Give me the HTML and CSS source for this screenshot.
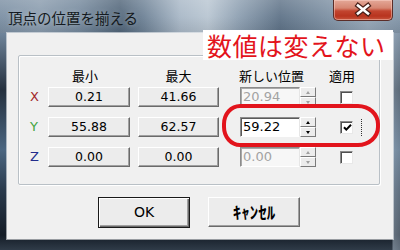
FILE: index.html
```html
<!DOCTYPE html>
<html lang="ja">
<head>
<meta charset="utf-8">
<title>頂点の位置を揃える</title>
<link rel="stylesheet" href="styles.css">
</head>
<body>
<div class="window">
  <div class="titlebar">
    <span class="title">頂点の位置を揃える</span>
    <div class="close">
      <svg width="60" height="21" viewBox="0 0 60 21">
        <path d="M25 6.5 L35 14.5 M35 6.5 L25 14.5" stroke="#4a2019" stroke-width="5" stroke-linecap="square" fill="none"/>
        <path d="M25 6.5 L35 14.5 M35 6.5 L25 14.5" stroke="#ffffff" stroke-width="2.6" stroke-linecap="square" fill="none"/>
      </svg>
    </div>
  </div>
  <div class="client">
    <div class="group">
      <div class="grid">
        <span></span>
        <span class="hd hd-min">最小</span>
        <span class="hd hd-max">最大</span>
        <span class="hd hd-new">新しい位置</span>
        <span class="hd hd-apply">適用</span>

        <span class="axis ax-x">X</span>
        <div class="vbtn w1">0.21</div>
        <div class="vbtn w2">41.66</div>
        <div class="combo disabled">
          <div class="edit">20.94</div>
          <div class="spin"><span class="sb"><i class="up"></i></span><span class="sb"><i class="dn"></i></span></div>
        </div>
        <div class="chk-cell"><span class="chk"></span></div>

        <span class="axis ax-y">Y</span>
        <div class="vbtn w1">55.88</div>
        <div class="vbtn w2">62.57</div>
        <div class="combo">
          <div class="edit">59.22</div>
          <div class="spin"><span class="sb"><i class="up"></i></span><span class="sb"><i class="dn"></i></span></div>
        </div>
        <div class="chk-cell">
          <span class="chk">
            <svg width="9" height="9" viewBox="0 0 9 9"><path d="M1 4.2 L3.3 6.6 L8 1.8" stroke="#000" stroke-width="2" fill="none"/></svg>
          </span>
          <span class="focus"></span>
        </div>

        <span class="axis ax-z">Z</span>
        <div class="vbtn w1">0.00</div>
        <div class="vbtn w2">0.00</div>
        <div class="combo disabled">
          <div class="edit">0.00</div>
          <div class="spin"><span class="sb"><i class="up"></i></span><span class="sb"><i class="dn"></i></span></div>
        </div>
        <div class="chk-cell"><span class="chk"></span></div>
      </div>
    </div>
    <div class="actions">
      <div class="btn default">OK</div>
      <div class="btn cancel">ｷｬﾝｾﾙ</div>
    </div>
  </div>
  <div class="note">数値は変えない</div>
  <div class="mark"></div>
</div>
</body>
</html>
```

FILE: styles.css
```css
html, body {
  margin: 0;
  padding: 0;
}
body {
  width: 400px;
  height: 250px;
  overflow: hidden;
  background: #2a3644;
}
.window {
  position: relative;
  width: 400px;
  height: 250px;
  display: flex;
  flex-direction: column;
  background:
    linear-gradient(90deg, rgba(0,0,0,0) 0, rgba(0,0,0,0) 392px, rgba(170,185,200,0.55) 393px, rgba(150,165,180,0.5) 400px),
    linear-gradient(180deg, #8ea2b6 0px, #6e8399 34px, #24303e 90px, #4b6681 150px, #2a3a4c 190px, #141c26 235px, #2f3b48 250px);
  font-family: "Noto Sans CJK JP", sans-serif;
}
.titlebar {
  height: 33px;
  flex: none;
  display: flex;
  align-items: flex-start;
  background:
    linear-gradient(180deg, rgba(255,255,255,0.18) 0, rgba(255,255,255,0.05) 50%, rgba(0,0,0,0.08) 100%),
    linear-gradient(90deg, #7c90a4 0%, #8a9cae 10%, #75899d 20%, #52667a 30%, #6f8397 36%, #a9b8c7 45%, #b9c6d2 52%, #8c9eb0 60%, #5f7388 70%, #7d90a3 82%, #96a7b8 92%, #8396a9 100%);
}
.title {
  margin: 8px 0 0 8px;
  font-size: 14.5px;
  line-height: 20px;
  color: #141a20;
  text-shadow: 0 0 5px rgba(255,255,255,0.35);
}
.close {
  margin-left: auto;
  margin-right: 7px;
  width: 60px;
  height: 21px;
  box-sizing: border-box;
  border: 1px solid #5b2d28;
  border-top: none;
  border-radius: 0 0 5px 5px;
  background: linear-gradient(180deg, #e4a898 0%, #d68672 40%, #c2452f 55%, #b8341f 80%, #c8553c 100%);
  box-shadow: inset 0 0 0 1px rgba(255,220,210,0.45);
}
.close svg {
  display: block;
  margin: -1px 0 0 -1px;
}
.client {
  margin: 0 7px;
  height: 206px;
  flex: none;
  background: #f0f0f0;
  box-shadow: 0 0 0 1px rgba(255,255,255,0.55);
  display: flex;
  flex-direction: column;
}
.group {
  margin: 22px 0 0 11px;
  width: 362px;
  height: 130px;
  box-sizing: border-box;
  border: 1px solid #b9c0c6;
  border-radius: 2px;
  box-shadow: inset 1px 1px 0 #ffffff, 1px 1px 0 #ffffff;
  padding: 10px 0 0 10px;
}
.grid {
  display: grid;
  grid-template-columns: 19px 90px 102px 100px 1fr;
  grid-template-rows: 21px 30px 30px 30px;
  align-items: start;
}
.hd {
  font-size: 13px;
  line-height: 19px;
  color: #000;
}
.hd-min {
  width: 74px;
  text-align: center;
}
.hd-max {
  width: 81px;
  text-align: center;
}
.hd-new {
  margin-left: -1px;
}
.hd-apply {
  margin-left: -11px;
}
.axis {
  font-family: "DejaVu Sans", sans-serif;
  font-size: 13px;
  line-height: 20px;
  margin-left: 1px;
}
.ax-x { color: #a3282c; }
.ax-y { color: #41a33e; }
.ax-z { color: #232c8c; }
.vbtn {
  height: 20px;
  box-sizing: border-box;
  background: #ececec;
  border: 1px solid;
  border-color: #ffffff #6a6a6a #6a6a6a #ffffff;
  box-shadow: inset -1px -1px 0 #a0a0a0;
  font-family: "DejaVu Sans", sans-serif;
  font-size: 12.5px;
  line-height: 18px;
  text-align: center;
  color: #000;
}
.w1 { width: 82px; }
.w2 { width: 81px; }
.combo {
  display: flex;
  width: 76px;
  height: 20px;
}
.edit {
  width: 60px;
  height: 20px;
  box-sizing: border-box;
  background: #ffffff;
  border: 1px solid;
  border-color: #8c8c8c #e6e6e6 #ffffff #8c8c8c;
  box-shadow: inset 1px 1px 0 #5a5a5a;
  font-family: "DejaVu Sans", sans-serif;
  font-size: 13px;
  line-height: 18px;
  padding-left: 2px;
  color: #000;
}
.disabled .edit {
  background: #f7f7f7;
  color: #a3a3a3;
  box-shadow: inset 1px 1px 0 #a8a8a8;
}
.spin {
  width: 16px;
  height: 20px;
  display: flex;
  flex-direction: column;
}
.sb {
  flex: 1;
  box-sizing: border-box;
  background: #ececec;
  border: 1px solid;
  border-color: #ffffff #7a7a7a #7a7a7a #ffffff;
  display: flex;
  align-items: center;
  justify-content: center;
}
.up, .dn {
  width: 0;
  height: 0;
  border-left: 2.5px solid transparent;
  border-right: 2.5px solid transparent;
}
.up { border-bottom: 3px solid #000; }
.dn { border-top: 3px solid #000; }
.disabled .up { border-bottom-color: #a0a0a0; }
.disabled .dn { border-top-color: #a0a0a0; }
.chk-cell {
  height: 20px;
  display: flex;
  align-items: center;
}
.chk {
  width: 13px;
  height: 13px;
  box-sizing: border-box;
  background: #ffffff;
  border: 1px solid;
  border-color: #8a8a8a #e8e8e8 #e8e8e8 #8a8a8a;
  box-shadow: inset 1px 1px 0 #505050;
  display: flex;
  align-items: center;
  justify-content: center;
}
.chk svg {
  display: block;
  margin: 1px 0 0 1px;
}
.focus {
  margin-left: 8px;
  width: 0;
  height: 17px;
  border-right: 1px dotted #333;
}
.actions {
  display: flex;
  align-items: flex-start;
  gap: 18px;
  margin: 12px 0 0 91px;
}
.btn {
  width: 92px;
  height: 30px;
  box-sizing: border-box;
  background: #ececec;
  border: 1px solid;
  border-color: #ffffff #6a6a6a #6a6a6a #ffffff;
  box-shadow: inset -1px -1px 0 #a0a0a0;
  text-align: center;
  color: #000;
}
.default {
  height: 31px;
  border: 1px solid #1a1a1a;
  box-shadow: inset 1px 1px 0 #ffffff, inset -1px -1px 0 #6a6a6a, inset -2px -2px 0 #a0a0a0;
  font-family: "DejaVu Sans", sans-serif;
  font-size: 14px;
  line-height: 29px;
}
.cancel {
  font-family: "Noto Sans CJK JP", sans-serif;
  font-size: 17px;
  font-weight: 700;
  line-height: 27px;
}
.note {
  position: absolute;
  left: 203px;
  top: 30px;
  width: 190px;
  height: 30px;
  background: #ffffff;
  color: #e3141c;
  font-family: "Noto Sans CJK JP", sans-serif;
  font-size: 25px;
  line-height: 30px;
  letter-spacing: 0.5px;
  padding-left: 4px;
  box-sizing: border-box;
  white-space: nowrap;
}
.mark {
  position: absolute;
  left: 222px;
  top: 104px;
  width: 158px;
  height: 43px;
  box-sizing: border-box;
  border: 4.5px solid #e2141c;
  border-radius: 18px 22px 22px 18px / 20px;
}
```
